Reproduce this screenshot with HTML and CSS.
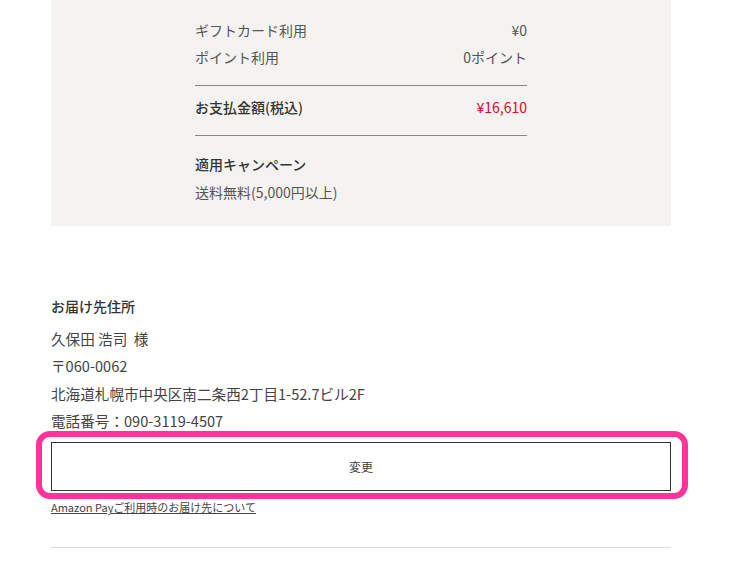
FILE: index.html
```html
<!DOCTYPE html>
<html lang="ja">
<head>
  <meta charset="UTF-8" />
  <meta name="viewport" content="width=device-width, initial-scale=1.0"/>
  <title>ご注文内容の確認</title>
  <link rel="stylesheet" href="styles.css">
</head>
<body>
  <main class="checkout">
    <section class="summary">
      <div class="summary-inner">
        <div class="row">
          <span>ギフトカード利用</span>
          <span>¥0</span>
        </div>
        <div class="row">
          <span>ポイント利用</span>
          <span>0ポイント</span>
        </div>
        <div class="row total">
          <span>お支払金額(税込)</span>
          <span class="price">¥16,610</span>
        </div>
        <div class="campaign">
          <h3>適用キャンペーン</h3>
          <p>送料無料(5,000円以上)</p>
        </div>
      </div>
    </section>

    <section class="address">
      <h2>お届け先住所</h2>
      <p>久保田 浩司&nbsp;&nbsp;様</p>
      <p>〒060-0062</p>
      <p>北海道札幌市中央区南二条西2丁目1-52.7ビル2F</p>
      <p>電話番号：090-3119-4507</p>
      <div class="change-wrap">
        <button class="change-btn" type="button">変更</button>
      </div>
      <a class="amazon-link" href="#">Amazon Payご利用時のお届け先について</a>
    </section>

    <hr class="divider">
  </main>
</body>
</html>
```

FILE: styles.css
```css
html, body {
  margin: 0;
  background: #fff;
  color: #444;
  font-family: "Noto Sans CJK JP", "Noto Sans", sans-serif;
}
.checkout {
  width: 620px;
  margin: 0 0 0 51px;
}
.summary {
  background-color: #f5f3f1;
  padding: 17px 0 20px;
}
.summary-inner {
  width: 332px;
  margin: 0 auto;
}
.row {
  display: flex;
  justify-content: space-between;
  font-size: 14px;
  line-height: 27px;
  color: #555;
}
.row.total {
  margin-top: 14px;
  padding: 8px 0 14px;
  border-top: 1px solid #888;
  border-bottom: 1px solid #888;
  font-weight: 500;
  color: #333;
}
.price {
  color: #e0002a;
  font-weight: normal;
}
.campaign {
  padding-top: 15px;
}
.campaign h3 {
  margin: 0;
  font-size: 14px;
  font-weight: 500;
  line-height: 27px;
  color: #333;
}
.campaign p {
  margin: 1px 0 0;
  font-size: 14px;
  line-height: 27px;
  color: #555;
}
.address {
  padding-top: 67px;
}
.address h2 {
  margin: 0 0 5px;
  font-size: 14px;
  font-weight: 500;
  line-height: 27px;
  color: #333;
}
.address p {
  margin: 0;
  font-size: 14.6px;
  line-height: 27.3px;
  color: #444;
}
.change-wrap {
  position: relative;
  margin-top: 8px;
}
.change-wrap::after {
  content: '';
  position: absolute;
  top: -11px;
  left: -15px;
  right: -17px;
  bottom: -8px;
  border: 6px solid #ff3399;
  border-radius: 14px;
  pointer-events: none;
}
.change-btn {
  display: block;
  width: 100%;
  height: 49px;
  background: #fff;
  border: 1px solid #333;
  border-radius: 0;
  font-family: inherit;
  font-size: 12px;
  color: #444;
  cursor: pointer;
}
.amazon-link {
  display: inline-block;
  margin-top: 8px;
  font-size: 11px;
  line-height: 16px;
  color: #444;
  text-decoration: underline;
}
.divider {
  margin: 30px 0 0;
  border: none;
  border-top: 1px solid #ddd;
}
```
